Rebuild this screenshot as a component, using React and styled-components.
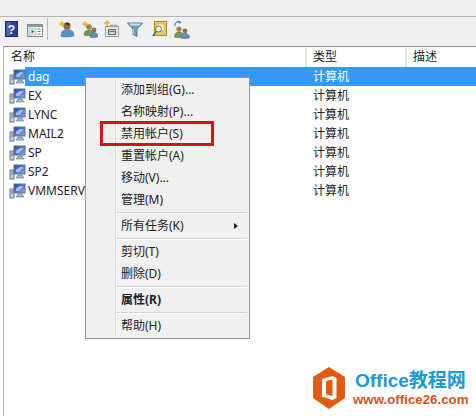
import React from "react";
import styled, { createGlobalStyle } from "styled-components";

const Global = createGlobalStyle`
  html, body { margin: 0; padding: 0; background: #fff; }
  body { font-family: "Noto Sans", "Noto Sans CJK SC", sans-serif; font-size: 12px; color: #222; }
`;
const Page = styled.div`
  position: relative; width: 476px; height: 416px; overflow: hidden; background: #fff;
`;
const TopBand = styled.div`
  height: 16px; background: #f0f0f0; border-bottom: 1px solid #b4b4b4;
`;
const Toolbar = styled.div`
  box-sizing: border-box; height: 29px; background: #f0f0f0; display: flex; align-items: center;
  padding: 0 0 5px 5px;
`;
const ToolIcon = styled.svg`
  display: block; flex: none; margin-right: ${p => p.$gap || 0}px;
`;
const ToolSep = styled.div`
  width: 1px; height: 22px; background: #b9b9b9; margin-right: 10px; flex: none;
`;
const ListFrame = styled.div`
  margin-left: 3px; height: 370px; background: #fff;
  border-top: 1px solid #8e8e8e; border-left: 1px solid #b0b0b0; padding-top: 1px;
`;
const Header = styled.div`
  display: grid; grid-template-columns: 303px 100px 1fr; height: 19px;
`;
const HeaderCell = styled.div`
  padding-left: ${p => p.$pad || 6}px; line-height: 18px; color: #222; border-right: 2px solid #e6e6e6;
  &:last-child { border-right: none; }
`;
const Row = styled.div`
  display: grid; grid-template-columns: 303px 100px 1fr; height: 19px; align-items: center;
  position: relative;
`;
const NameCell = styled.div`
  display: flex; align-items: center; height: 19px; padding-left: 5px; white-space: nowrap;
`;
const NameLabel = styled.span`
  padding-left: 2px; line-height: 19px;
  color: ${p => (p.$selected ? "#fff" : "#222")};
`;
const TypeCell = styled.div`
  padding-left: 6px; line-height: 19px; color: ${p => (p.$selected ? "#fff" : "#222")};
`;
const SelectedRow = styled(Row)`
  background: linear-gradient(to right, #fff 0, #fff 21px, #3399ff 21px);
`;
const Menu = styled.div`
  position: absolute; left: 85px; top: 77px; width: 163px; height: 259px;
  background: #f0f0f0; border: 1px solid #979797; padding-top: 1px;
  display: flex; flex-direction: column;
  &::before { content: ""; position: absolute; left: 29px; top: 2px; bottom: 2px; width: 1px; background: #d4d4d4; box-shadow: 1px 0 0 #fff; }
`;
const MenuItem = styled.div`
  height: ${p => p.$h || 22}px; line-height: ${p => p.$h || 22}px; padding-left: 35px; position: relative;
  color: #222; font-weight: ${p => (p.$bold ? 700 : 400)}; white-space: nowrap; flex: none;
`;
const MenuSep = styled.div`
  height: 1px; margin: ${p => p.$top || 1}px 2px 1px 30px; background: #cfcfcf; border-bottom: 1px solid #fff; flex: none;
`;
const Arrow = styled.span`
  position: absolute; right: 11px; top: 8px; width: 0; height: 0;
  border-left: 4px solid #222; border-top: 3.5px solid transparent; border-bottom: 3.5px solid transparent;
`;
const Highlight = styled.div`
  position: absolute; left: 100px; top: 121px; width: 108px; height: 19px;
  border: 3px solid #d0141c; pointer-events: none;
`;
const Logo = styled.div`
  position: absolute; left: 313px; top: 367px; display: flex; align-items: center; gap: 8px;
`;
const LogoText = styled.div`
  display: flex; flex-direction: column; font-family: "Liberation Sans", "Noto Sans CJK SC", sans-serif; font-weight: 700;
`;
const LogoTop = styled.div`
  font-size: 19px; line-height: 22px; color: #1a9ad6; white-space: nowrap; padding-left: 2px;
`;
const LogoBottom = styled.div`
  font-size: 13.3px; line-height: 15px; color: #d9531e; white-space: nowrap;
`;

const Computer = ({ id }) => (
  <ToolIcon width="17" height="16" viewBox="0 0 17 16">
    <defs>
      <linearGradient id={id} x1="0" y1="0" x2="1" y2="1">
        <stop offset="0" stopColor="#1e3fb0" />
        <stop offset="1" stopColor="#7fb2ef" />
      </linearGradient>
    </defs>
    <rect x="1" y="6" width="4" height="9" fill="#c8d2da" stroke="#64788a" strokeWidth="1" />
    <path d="M2 8h2M2 10h2" stroke="#64788a" />
    <rect x="5" y="1" width="11" height="9" stroke="#5f7288" strokeWidth="1" style={{ fill: `url(#${id})` }} />
    <path d="M7 5.5 L11 3 L14 3 L14 4 L10 8 L7 8Z" fill="#e8f2ff" opacity=".55" />
    <path d="M9 11h4l2 3H7z" fill="#a8b6c4" stroke="#5f7288" strokeWidth=".6" />
  </ToolIcon>
);

const HelpIcon = () => (
  <ToolIcon width="13" height="16" viewBox="0 0 13 16" $gap={9}>
    <rect x="0.5" y="0.5" width="12" height="15" fill="#2a3f9e" stroke="#1c2a70" />
    <rect x="1.5" y="1.5" width="4" height="13" fill="#4a68c8" />
    <text x="6.5" y="12.5" textAnchor="middle" fontSize="12" fontWeight="700" fill="#fff" fontFamily="Liberation Sans, sans-serif">?</text>
  </ToolIcon>
);
const PaneIcon = () => (
  <ToolIcon width="16" height="13" viewBox="0 0 16 13" $gap={4} style={{ marginTop: 3 }}>
    <rect x="0.5" y="0.5" width="15" height="12" fill="#fdfdfd" stroke="#7e8a94" />
    <rect x="1" y="1" width="14" height="2" fill="#8c98a4" />
    <rect x="2" y="4" width="7" height="7" fill="#dff0d8" stroke="#9aa6ae" strokeWidth=".6" />
    <path d="M4.5 5.5 L7.5 7.5 L4.5 9.5Z" fill="#2f8a3a" />
    <path d="M10.5 5h3M10.5 7.5h3M10.5 10h3" stroke="#6b7682" />
  </ToolIcon>
);
const Spark = ({ x = 3, y = 3 }) => (
  <path d={`M${x} ${y - 3} L${x + 1} ${y - 1} L${x + 3} ${y} L${x + 1} ${y + 1} L${x} ${y + 3} L${x - 1} ${y + 1} L${x - 3} ${y} L${x - 1} ${y - 1}Z`} fill="#f0b429" stroke="#e8c04a" strokeWidth=".8" />
);
const UserIcon = () => (
  <ToolIcon width="17" height="18" viewBox="0 0 17 18" $gap={7}>
    <Spark x={4} y={4} />
    <circle cx="9" cy="6" r="3.6" fill="#9a6a46" />
    <path d="M7 3.5a3 3 0 0 1 5 1l-1 1-3-1z" fill="#4a3426" />
    <path d="M3 16c0-5 3-6.5 6-6.5s7 1.5 7 6c0 1.5-13 2-13 .5z" fill="#5b8fc4" stroke="#3d6f9f" strokeWidth=".6" />
  </ToolIcon>
);
const GroupIcon = () => (
  <ToolIcon width="16" height="18" viewBox="0 0 16 18" $gap={6}>
    <Spark x={3} y={4} />
    <circle cx="7" cy="7" r="2.8" fill="#a77b52" />
    <path d="M2 15c0-4 2.5-5 5-5s4 1 4 4c0 2-9 2-9 1z" fill="#6f9a4d" stroke="#557b39" strokeWidth=".5" />
    <circle cx="12" cy="10" r="2.4" fill="#9a6a46" />
    <path d="M8 17c0-3.5 2-4.5 4-4.5s4 1 4 4c0 1-8 1.5-8 .5z" fill="#5b8fc4" stroke="#3d6f9f" strokeWidth=".5" />
  </ToolIcon>
);
const OuIcon = () => (
  <ToolIcon width="15" height="18" viewBox="0 0 15 18" $gap={8}>
    <Spark x={3} y={3} />
    <path d="M1.5 6.5h13v10h-13z" fill="#ececec" stroke="#8e9498" />
    <path d="M6 5h7v2H6z" fill="#b8bec2" stroke="#8e9498" strokeWidth=".6" />
    <rect x="4.5" y="9.5" width="7" height="5" fill="#cfd3d6" stroke="#5e6468" />
    <path d="M5.5 11.5h5" stroke="#5e6468" />
  </ToolIcon>
);
const FilterIcon = () => (
  <ToolIcon width="16" height="15" viewBox="0 0 16 15" $gap={9}>
    <path d="M0.5 1h15L10 7v7.5L6 12.5V7z" fill="#6fa0b8" stroke="#4d7f98" />
    <path d="M2 1.5h12L12 3.5H4z" fill="#cfe0ea" />
    <path d="M6.5 7v5" stroke="#a7c6d6" />
  </ToolIcon>
);
const QueryIcon = () => (
  <ToolIcon width="15" height="16" viewBox="0 0 15 16" $gap={6}>
    <rect x="2.5" y="0.5" width="12" height="14" fill="#e8c766" stroke="#b08a22" />
    <rect x="5" y="3" width="7" height="7" fill="#f6efd6" stroke="#c9a63c" strokeWidth=".6" />
    <circle cx="6.5" cy="8" r="3" fill="#e8eef0" fillOpacity=".7" stroke="#6c7a80" />
    <path d="M4.3 10.3 L0.8 15" stroke="#5b6870" strokeWidth="1.6" />
  </ToolIcon>
);
const RefreshGroupIcon = () => (
  <ToolIcon width="17" height="19" viewBox="0 0 17 19">
    <path d="M2 6a3.5 3.5 0 0 1 5-4" fill="none" stroke="#2f7f9a" strokeWidth="1.2" />
    <path d="M6 0.5 L8.5 2.5 L5.8 3.8Z" fill="#2f7f9a" />
    <circle cx="6" cy="9" r="2.6" fill="#a77b52" />
    <path d="M1.5 17c0-4 2.5-5 4.5-5s4.5 1 4.5 4c0 2-9 2-9 1z" fill="#6f9a4d" stroke="#557b39" strokeWidth=".5" />
    <circle cx="12" cy="11" r="2.4" fill="#9a6a46" />
    <path d="M8 18c0-3.5 2-4.5 4-4.5s4.5 1 4.5 4c0 1-8.5 1.5-8.5.5z" fill="#5b8fc4" stroke="#3d6f9f" strokeWidth=".5" />
  </ToolIcon>
);

const LogoMark = () => (
  <ToolIcon width="32" height="42" viewBox="0 0 32 42">
    <path d="M16 0 L32 10 V31 L16 42 L0 31 V10Z" fill="#df5d12" />
    <path d="M19.5 9 L9 12 V29.5 L19.5 33 L23.5 31 V11Z" fill="#fff" />
    <path d="M13 14 L19.5 12.5 V29 L13 27.5Z" fill="#df5d12" />
  </ToolIcon>
);

const names = ["dag", "EX", "LYNC", "MAIL2", "SP", "SP2", "VMMSERVER"];

export default function App() {
  return (
    <Page>
      <Global />
      <TopBand />
      <Toolbar>
        <HelpIcon />
        <PaneIcon />
        <ToolSep />
        <UserIcon />
        <GroupIcon />
        <OuIcon />
        <FilterIcon />
        <QueryIcon />
        <RefreshGroupIcon />
      </Toolbar>
      <ListFrame>
        <Header>
          <HeaderCell $pad={7}>名称</HeaderCell>
          <HeaderCell>类型</HeaderCell>
          <HeaderCell>描述</HeaderCell>
        </Header>
        {names.map((n, i) => {
          const R = i === 0 ? SelectedRow : Row;
          return (
            <R key={n}>
              <NameCell>
                <Computer id={`pc${i}`} />
                <NameLabel $selected={i === 0}>{n}</NameLabel>
              </NameCell>
              <TypeCell $selected={i === 0}>计算机</TypeCell>
            </R>
          );
        })}
      </ListFrame>
      <Menu>
        <MenuItem>添加到组(G)...</MenuItem>
        <MenuItem>名称映射(P)...</MenuItem>
        <MenuItem>禁用帐户(S)</MenuItem>
        <MenuItem>重置帐户(A)</MenuItem>
        <MenuItem>移动(V)...</MenuItem>
        <MenuItem $h={21}>管理(M)</MenuItem>
        <MenuSep $top={2} />
        <MenuItem>所有任务(K)<Arrow /></MenuItem>
        <MenuSep />
        <MenuItem>剪切(T)</MenuItem>
        <MenuItem $h={21}>删除(D)</MenuItem>
        <MenuSep $top={2} />
        <MenuItem>
          <b>属性(R)</b>
        </MenuItem>
        <MenuSep />
        <MenuItem>帮助(H)</MenuItem>
      </Menu>
      <Highlight />
      <Logo>
        <LogoMark />
        <LogoText>
          <LogoTop>Office教程网</LogoTop>
          <LogoBottom>www.office26.com</LogoBottom>
        </LogoText>
      </Logo>
    </Page>
  );
}
